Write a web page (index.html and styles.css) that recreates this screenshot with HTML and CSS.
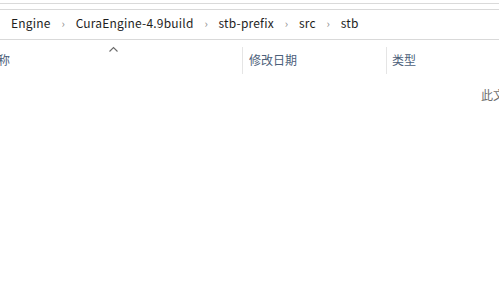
FILE: index.html
```html
<!DOCTYPE html>
<html lang="zh-CN">
<head>
  <meta charset="UTF-8" />
  <title>stb</title>
  <link rel="stylesheet" href="styles.css">
</head>
<body>
  <div class="ribbon-edge"></div>

  <div class="address">
    <span class="sep cut">›</span>
    <span class="crumb">Engine</span>
    <span class="sep">›</span>
    <span class="crumb">CuraEngine-4.9build</span>
    <span class="sep">›</span>
    <span class="crumb">stb-prefix</span>
    <span class="sep">›</span>
    <span class="crumb">src</span>
    <span class="sep">›</span>
    <span class="crumb">stb</span>
  </div>

  <div class="columns">
    <div class="col col-name">
      称
      <svg class="sort" width="9" height="6" viewBox="0 0 9 6">
        <path d="M0.5 5.5 L4.5 1.5 L8.5 5.5" fill="none" stroke="#6b6b6b" stroke-width="1.1" />
      </svg>
    </div>
    <div class="col col-date">修改日期</div>
    <div class="col col-type">类型</div>
  </div>

  <div class="empty">此文件夹为空。</div>
</body>
</html>
```

FILE: styles.css
```css
body {
  margin: 0; background: #fff; width: 499px; height: 294px; overflow: hidden;
  font-family: "Noto Sans CJK SC", "Noto Sans", sans-serif; font-size: 12px;
}
.ribbon-edge { height: 3px; border-bottom: 1px solid #dadada; }
.address {
  display: flex; align-items: center; height: 26px; padding-bottom: 3px; margin-top: 5px;
  border-top: 1px solid #d9d9d9; border-bottom: 1px solid #d9d9d9;
  color: #1e1e1e; white-space: nowrap; overflow: hidden;
}
.sep { color: #8a8a8a; font-size: 11px; width: 25px; text-align: center; }
.sep.cut { width: 3px; margin-left: -3px; margin-right: 11px; overflow: hidden; }
.crumb { line-height: 18px; letter-spacing: 0.2px; }
.columns {
  display: flex; height: 27px; margin-top: 7px; color: #4c607a; line-height: 26px;
}
.col { position: relative; white-space: nowrap; }
.col-name { width: 244px; border-right: 1px solid #e5e5e5; margin-left: -2px; }
.sort { position: absolute; left: 111px; top: -1px; }
.col-date { width: 137px; padding-left: 6px; border-right: 1px solid #e5e5e5; }
.col-type { padding-left: 5px; }
.empty { color: #6d6d6d; margin-top: 12px; padding-left: 481px; white-space: nowrap; }
```
